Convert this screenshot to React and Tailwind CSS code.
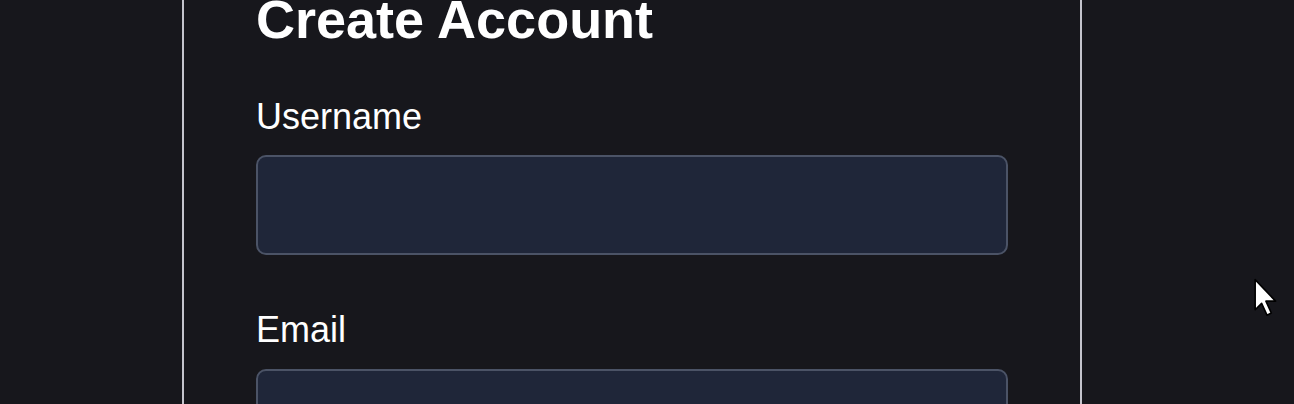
import React from "react";

export default function App() {
  return (
    <div
      className="relative w-[1294px] h-[404px] overflow-hidden bg-[#17171c]"
      style={{ fontFamily: '"Liberation Sans", Arial, sans-serif' }}
    >
      <div className="ml-[182px] flex flex-col w-[900px] h-[404px] border-x-2 border-[#c4c4cc] bg-[#17171c] px-[72px]">
        <h1 className="mt-[-8px] text-[54px] leading-none font-bold text-white whitespace-nowrap">
          Create Account
        </h1>
        <div className="mt-[53px]">
          <label className="block text-[36px] leading-none text-white">Username</label>
          <input
            type="text"
            className="mt-[20px] block w-[752px] h-[100px] rounded-[10px] border-2 border-[#4b5366] bg-[#1f2639] outline-none"
          />
        </div>
        <div className="mt-[57px]">
          <label className="block text-[36px] leading-none text-white">Email</label>
          <input
            type="email"
            className="mt-[21px] block w-[752px] h-[100px] rounded-[10px] border-2 border-[#4b5366] bg-[#1f2639] outline-none"
          />
        </div>
      </div>
      <svg
        className="absolute left-[1253px] top-[278px]"
        width="28"
        height="42"
        viewBox="0 0 26 38"
      >
        <path
          d="M2 1 L2 29 L8 23 L13 34 L17 32 L12 21 L21 21 Z"
          fill="white"
          stroke="black"
          strokeWidth="1.5"
          strokeLinejoin="round"
        />
      </svg>
    </div>
  );
}
